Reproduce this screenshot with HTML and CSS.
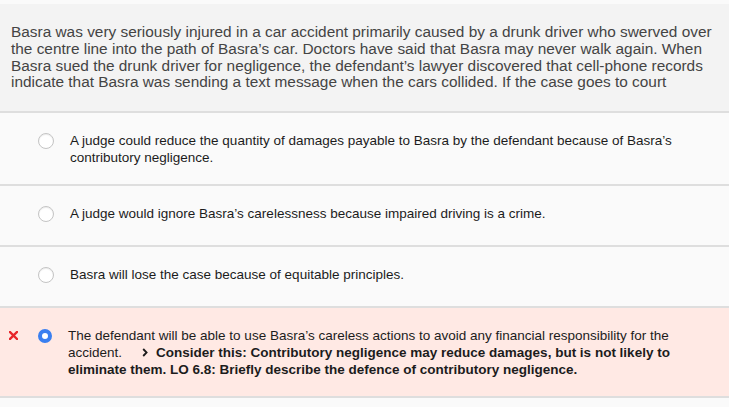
FILE: index.html
```html
<!DOCTYPE html>
<html>
<head>
<meta charset="utf-8">
<link rel="stylesheet" href="styles.css">
</head>
<body>
<div class="page">
  <div class="question">Basra was very seriously injured in a car accident primarily caused by a drunk driver who swerved over the centre line into the path of Basra’s car. Doctors have said that Basra may never walk again. When Basra sued the drunk driver for negligence, the defendant’s lawyer discovered that cell-phone records indicate that Basra was sending a text message when the cars collided. If the case goes to court</div>
  <div class="options">
    <div class="option">
      <span class="mark"></span>
      <span class="radio"></span>
      <div class="text">A judge could reduce the quantity of damages payable to Basra by the defendant because of Basra’s contributory negligence.</div>
    </div>
    <div class="option">
      <span class="mark"></span>
      <span class="radio"></span>
      <div class="text">A judge would ignore Basra’s carelessness because impaired driving is a crime.</div>
    </div>
    <div class="option">
      <span class="mark"></span>
      <span class="radio"></span>
      <div class="text">Basra will lose the case because of equitable principles.</div>
    </div>
    <div class="option wrong">
      <span class="mark"><svg width="9" height="9" viewBox="0 0 9 9"><path d="M1 1L8 8M8 1L1 8" stroke="#e8262b" stroke-width="2.4" stroke-linecap="square"/></svg></span>
      <span class="radio checked"></span>
      <div class="text">The defendant will be able to use Basra’s careless actions to avoid any financial responsibility for the accident.<svg class="chev" width="6" height="9" viewBox="0 0 6 9"><path d="M1.2 1L4.6 4.5L1.2 8" fill="none" stroke="#1c1c1c" stroke-width="1.8"/></svg><b>Consider this: Contributory negligence may reduce damages, but is not likely to eliminate them. LO 6.8: Briefly describe the defence of contributory negligence.</b></div>
    </div>
  </div>
</div>
</body>
</html>
```

FILE: styles.css
```css
html, body {
  margin: 0;
  padding: 0;
  background: #fafafa;
}
body {
  font-family: "Liberation Sans", Arial, Helvetica, sans-serif;
}
.page {
  padding-top: 4px;
}
.question {
  background: #f3f3f3;
  color: #444;
  font-size: 15.4px;
  line-height: 16.8px;
  padding: 20px 8px 20px 11px;
  border-bottom: 2px solid #dedede;
}
.option {
  display: flex;
  align-items: flex-start;
  min-height: 61px;
  box-sizing: border-box;
  padding: 19px 40px 18px 0;
  border-bottom: 2px solid #dedede;
  background: #fafafa;
}
.option.wrong {
  background: #ffe9e4;
}
.mark {
  width: 38px;
  flex: none;
  display: flex;
  justify-content: flex-end;
}
.mark svg {
  margin-top: 4px;
  margin-right: 20px;
}
.radio {
  flex: none;
  width: 14px;
  height: 14px;
  border: 1px solid #c4c4c4;
  border-radius: 50%;
  background: #fff;
  box-shadow: inset 0 1px 1px rgba(0,0,0,0.08);
  margin-top: 1px;
  margin-right: 16px;
}
.radio.checked {
  width: 6px;
  height: 6px;
  border: 4px solid #3a7ff0;
  background: #fff;
  box-shadow: none;
  margin-top: 2px;
}
.text {
  color: #1c1c1c;
  font-size: 13.5px;
  line-height: 17px;
}
.chev {
  margin-left: 20px;
  margin-right: 8px;
  vertical-align: 0;
}
```
